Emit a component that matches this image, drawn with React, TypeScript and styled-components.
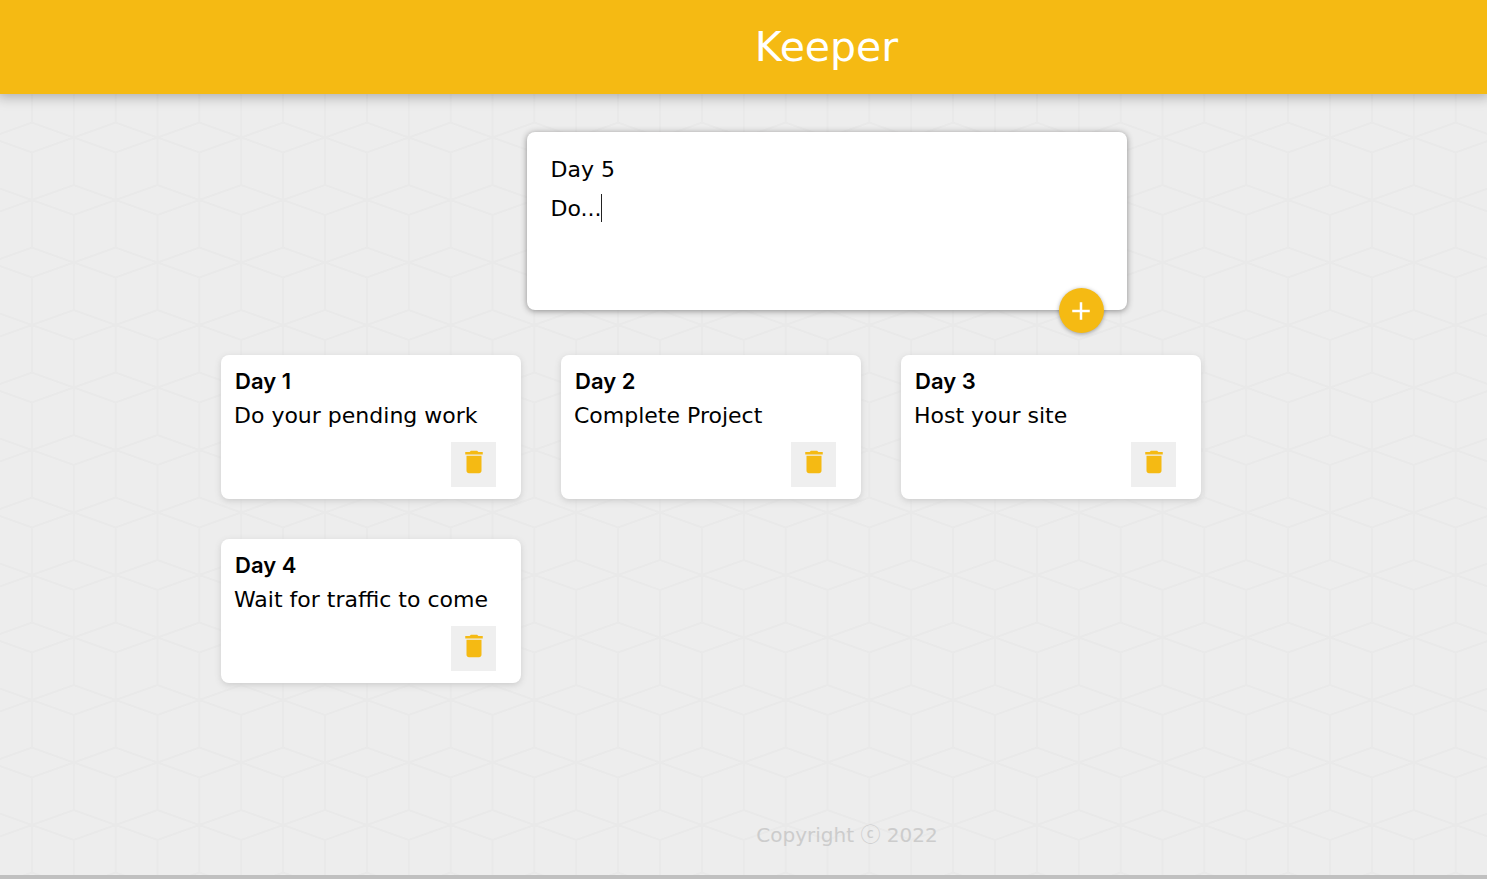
import React, { useState } from "react";
import styled, { createGlobalStyle } from "styled-components";

const AMBER = "#f5ba13";
const SANS = '"DejaVu Sans", "Noto Sans CJK SC", sans-serif';

/* One tile of the tumbling-block line pattern: four cubes wide, one pair of rows high. */
const TILE_W = 335;
const TILE_H = 125;
const STEP = TILE_W / 4;

function cubePath(cx: number, cy: number) {
  const half = STEP / 2;
  return (
    `M${cx - half} ${cy}L${cx} ${cy - 15}L${cx + half} ${cy}L${cx} ${cy + 15}Z` +
    `M${cx} ${cy + 15}V${cy + 110}`
  );
}

const cubes = [-1, 0, 1, 2, 3, 4]
  .map((i) =>
    [
      cubePath(i * STEP + STEP / 2, TILE_H / 2),
      cubePath(i * STEP + STEP / 2, -TILE_H / 2),
      cubePath(i * STEP, 0),
      cubePath(i * STEP, TILE_H),
    ].join("")
  )
  .join("");

const tile = encodeURIComponent(
  `<svg xmlns="http://www.w3.org/2000/svg" width="${TILE_W}" height="${TILE_H}"><path d="${cubes}" fill="none" stroke="#e9e9e9" stroke-width="2"/></svg>`
);

const GlobalStyle = createGlobalStyle`
  * {
    box-sizing: border-box;
  }
  body {
    margin: 0;
    background: #ededed;
    font-family: ${SANS};
    color: #000;
  }
`;

const Page = styled.div`
  display: flex;
  flex-direction: column;
  min-height: 100vh;
  border-bottom: 4px solid #c0c0c0;
  background: #ededed url("data:image/svg+xml,${tile}") -10px 75px;
`;

const Header = styled.header`
  padding-left: 166px;
  background: ${AMBER};
  box-shadow: 0 0 12px 3px rgba(0, 0, 0, 0.28);
  text-align: center;
`;

const Brand = styled.h1`
  margin: 0;
  font-size: 41px;
  font-weight: 400;
  line-height: 94px;
  color: #fff;
`;

const Composer = styled.div`
  padding: 38px 0 25px 166px;
`;

const Form = styled.form`
  position: relative;
  display: flex;
  flex-direction: column;
  gap: 2px;
  width: 100%;
  max-width: 600px;
  height: 178px;
  margin: 0 auto;
  padding: 18px 24px;
  border-radius: 8px;
  background: #fff;
  box-shadow: 0 1px 6px #8a8989;
`;

const fieldStyle = `
  width: 100%;
  padding: 5px 0;
  border: 0;
  outline: 0;
  background: transparent;
  color: #000;
  font-family: ${SANS};
  font-size: 22px;
  line-height: 28px;
`;

const TitleField = styled.input`
  ${fieldStyle}
  height: 38px;
`;

const ContentField = styled.textarea`
  ${fieldStyle}
  height: 94px;
  resize: none;
`;

const Caret = styled.span`
  position: absolute;
  left: 74px;
  top: 62px;
  width: 1px;
  height: 28px;
  background: #222;
`;

const AddButton = styled.button`
  position: absolute;
  right: 23px;
  bottom: -23px;
  display: flex;
  align-items: center;
  justify-content: center;
  width: 45px;
  height: 45px;
  padding: 0;
  border: 0;
  border-radius: 50%;
  background: ${AMBER};
  color: #fff;
  box-shadow: 0 1px 4px rgba(0, 0, 0, 0.35);
  cursor: pointer;
`;

const Notes = styled.main`
  display: flex;
  flex-wrap: wrap;
  gap: 40px;
  padding: 20px 20px 40px 221px;
`;

const Card = styled.article`
  display: flex;
  flex-direction: column;
  width: 300px;
  padding: 12px;
  border-radius: 8px;
  background: #fff;
  box-shadow: 0 2px 6px #ccc;
`;

const CardTitle = styled.h2`
  margin: 0 2px 4px;
  font-family: Inter, sans-serif;
  font-size: 22px;
  font-weight: 600;
  line-height: 28px;
`;

const CardText = styled.p`
  margin: 0 1px 9px;
  font-size: 22px;
  line-height: 34px;
  white-space: nowrap;
`;

const DeleteButton = styled.button`
  display: flex;
  align-items: center;
  justify-content: center;
  align-self: flex-end;
  width: 45px;
  height: 45px;
  margin-right: 13px;
  padding: 0 0 5px;
  border: 0;
  background: #efefef;
  color: ${AMBER};
  cursor: pointer;
`;

const Icon = styled.svg`
  width: 30px;
  height: 30px;
  fill: currentColor;
`;

const Footer = styled.footer`
  margin-top: auto;
  padding: 0 0 25px 207px;
  color: #ccc;
  font-size: 20px;
  line-height: 30px;
  text-align: center;
`;

const Copyright = styled.p`
  margin: 0;
`;

interface Note {
  title: string;
  content: string;
}

const initialNotes: Note[] = [
  { title: "Day 1", content: "Do your pending work" },
  { title: "Day 2", content: "Complete Project" },
  { title: "Day 3", content: "Host your site" },
  { title: "Day 4", content: "Wait for traffic to come" },
];

export default function App() {
  const [notes, setNotes] = useState(initialNotes);
  const [draft, setDraft] = useState<Note>({ title: "Day 5", content: "Do..." });

  const addNote = (event: React.FormEvent) => {
    event.preventDefault();
    setNotes([...notes, draft]);
    setDraft({ title: "", content: "" });
  };

  return (
    <Page>
      <GlobalStyle />
      <Header>
        <Brand>Keeper</Brand>
      </Header>
      <Composer>
        <Form onSubmit={addNote}>
          <TitleField
            aria-label="Title"
            value={draft.title}
            onChange={(e) => setDraft({ ...draft, title: e.target.value })}
          />
          <ContentField
            aria-label="Note"
            value={draft.content}
            onChange={(e) => setDraft({ ...draft, content: e.target.value })}
          />
          {draft.content === "Do..." && <Caret aria-hidden="true" />}
          <AddButton type="submit" aria-label="Add note">
            <Icon viewBox="0 0 24 24" aria-hidden="true">
              <path d="M19 13h-6v6h-2v-6H5v-2h6V5h2v6h6v2z" />
            </Icon>
          </AddButton>
        </Form>
      </Composer>
      <Notes>
        {notes.map((note, index) => (
          <Card key={index}>
            <CardTitle>{note.title}</CardTitle>
            <CardText>{note.content}</CardText>
            <DeleteButton
              type="button"
              aria-label={`Delete ${note.title}`}
              onClick={() => setNotes(notes.filter((_, i) => i !== index))}
            >
              <Icon viewBox="0 0 24 24" aria-hidden="true">
                <path d="M6 19c0 1.1.9 2 2 2h8c1.1 0 2-.9 2-2V7H6v12zM19 4h-3.5l-1-1h-5l-1 1H5v2h14V4z" />
              </Icon>
            </DeleteButton>
          </Card>
        ))}
      </Notes>
      <Footer>
        <Copyright>Copyright ⓒ 2022</Copyright>
      </Footer>
    </Page>
  );
}
